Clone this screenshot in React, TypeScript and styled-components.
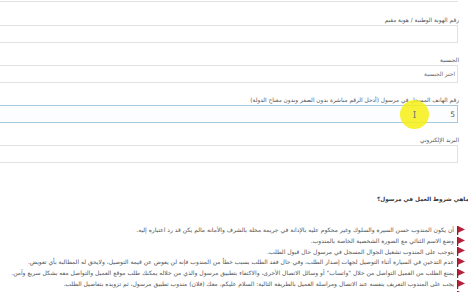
import React from 'react';
import styled, { createGlobalStyle } from 'styled-components';

const GlobalStyle = createGlobalStyle`
  html, body {
    margin: 0;
    padding: 0;
    background: #fff;
    overflow: hidden;
  }
  body {
    font-family: "DejaVu Sans", "Liberation Sans", sans-serif;
  }
`;

const fields = [
  { label: 'رقم الهوية الوطنية / هوية مقيم', value: '', kind: 'input' },
  { label: 'الجنسية', value: 'اختر الجنسية', kind: 'select' },
  {
    label: 'رقم الهاتف المسجل في مرسول (أدخل الرقم مباشرة بدون الصفر وبدون مفتاح الدولة)',
    value: '5',
    kind: 'focus',
  },
  { label: 'البريد الإلكتروني', value: '', kind: 'input' },
];

const rules = [
  'أن يكون المندوب حسن السيرة والسلوك وغير محكوم عليه بالإدانة في جريمة مخلة بالشرف والأمانة مالم يكن قد رد اعتباره إليه.',
  'وضع الاسم الثنائي مع الصورة الشخصية الخاصة بالمندوب.',
  'يتوجب على المندوب تشغيل الجوال المسجل في مرسول حال قبول الطلب.',
  'عدم التدخين في السيارة أثناء التوصيل لجهات إصدار الطلب، وفي حال فقد الطلب بسبب خطأ من المندوب فإنه لن يعوض عن قيمة التوصيل، ولايحق له المطالبة بأي تعويض.',
  'يمنع الطلب من العميل التواصل من خلال "واتساب" أو وسائل الاتصال الأخرى، والاكتفاء بتطبيق مرسول والذي من خلاله يمكنك طلب موقع العميل والتواصل معه بشكل سريع وآمن.',
  'يجب على المندوب التعريف بنفسه عند الاتصال ومراسلة العميل بالطريقة التالية: السلام عليكم، معك (فلان) مندوب تطبيق مرسول، ثم تزويده بتفاصيل الطلب.',
  'يلتزم المندوب بالتعامل مع العميل بكل احترام ولباقة.',
];

const App = () => {
  return (
    <Page dir="rtl">
      <GlobalStyle />
      <PrevField />
      {fields.map((f) => (
        <Field key={f.label}>
          <Label>{f.label}</Label>
          <Box focused={f.kind === 'focus'}>
            <BoxText muted={f.kind === 'select'}>{f.value}</BoxText>
            {f.kind === 'focus' && (
              <Highlight>
                <Caret>I</Caret>
              </Highlight>
            )}
          </Box>
        </Field>
      ))}
      <Heading>ماهي شروط العمل في مرسول؟</Heading>
      <RuleList>
        {rules.map((r) => (
          <Rule key={r}>
            <Flag viewBox="0 0 8 9">
              <rect x="0" y="0" width="1.2" height="9" fill="#8e1b2e" />
              <polygon points="1,0 8,3.4 1,6.8" fill="#b5203a" />
            </Flag>
            <RuleText>{r}</RuleText>
          </Rule>
        ))}
      </RuleList>
    </Page>
  );
};

const Page = styled.div`
  width: 468px;
  height: 292px;
  overflow: hidden;
  padding-right: 10px;
  box-sizing: border-box;
`;

const PrevField = styled.div`
  height: 1px;
  margin-left: -6px;
  border-bottom: 1px solid #e2e2e2;
  margin-bottom: 13px;
`;

const Field = styled.div`
  display: flex;
  flex-direction: column;
  margin-bottom: 12px;
`;

const Label = styled.div`
  font-size: 5.8px;
  line-height: 10px;
  height: 10px;
  color: #555;
  margin-right: -1px;
  white-space: nowrap;
`;

const Box = styled.div<{ focused?: boolean }>`
  position: relative;
  height: 18px;
  box-sizing: border-box;
  margin-left: -6px;
  border: 1px solid ${(p) => (p.focused ? '#a9c9de' : '#e1e1e1')};
  background: ${(p) => (p.focused ? '#fbfdfe' : '#fff')};
  display: flex;
  align-items: center;
  padding: 0 2px;
`;

const BoxText = styled.span<{ muted?: boolean }>`
  font-size: ${(p) => (p.muted ? '5.8px' : '7.5px')};
  color: ${(p) => (p.muted ? '#666' : '#555')};
`;

const Highlight = styled.div`
  position: absolute;
  right: 28px;
  top: -6px;
  width: 29px;
  height: 29px;
  border-radius: 50%;
  background: rgba(246, 240, 20, 0.85);
  display: flex;
  align-items: center;
  justify-content: center;
`;

const Caret = styled.span`
  font-family: "DejaVu Serif", serif;
  font-size: 10px;
  color: #777;
`;

const Heading = styled.div`
  font-size: 5.7px;
  font-weight: bold;
  color: #333;
  line-height: 10px;
  margin-top: 31px;
  margin-right: -11px;
  white-space: nowrap;
`;

const RuleList = styled.ul`
  list-style: none;
  margin: 21px 0 0;
  padding: 0;
`;

const Rule = styled.li`
  display: flex;
  align-items: center;
  gap: 3px;
  height: 10.8px;
  margin-right: -7px;
`;

const Flag = styled.svg`
  width: 8px;
  height: 9px;
  flex: none;
`;

const RuleText = styled.span`
  font-size: 6px;
  line-height: 10.8px;
  color: #555;
  white-space: nowrap;
`;

export default App;
